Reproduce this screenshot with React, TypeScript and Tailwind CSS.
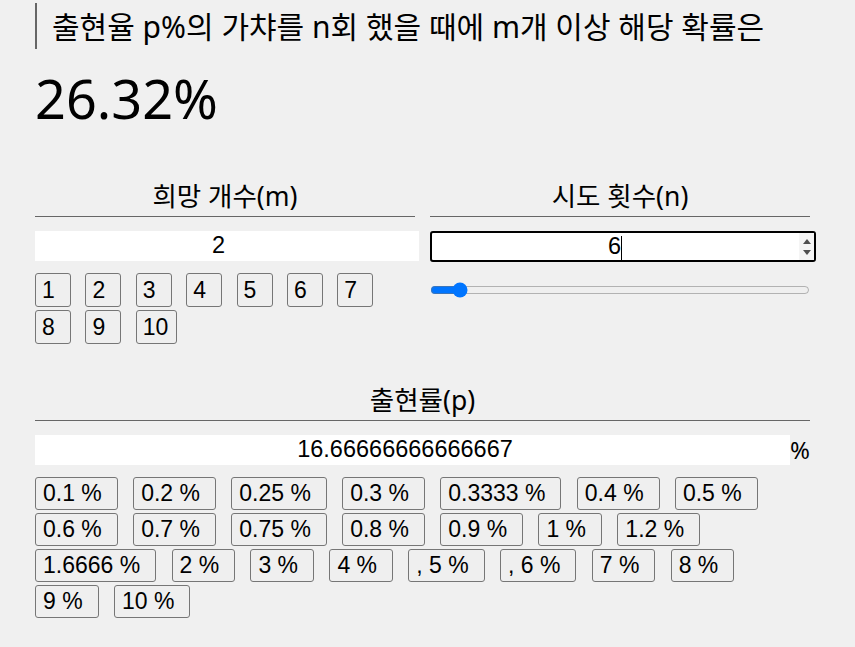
import { useState } from "react";

const counts = [1, 2, 3, 4, 5, 6, 7, 8, 9, 10];
const rates = [
  "0.1", "0.2", "0.25", "0.3", "0.3333", "0.4", "0.5",
  "0.6", "0.7", "0.75", "0.8", "0.9", "1", "1.2",
  "1.6666", "2", "3", "4", ", 5", ", 6", "7", "8",
  "9", "10",
];

const uiFont = { fontFamily: "'Liberation Sans', 'Noto Sans CJK KR', sans-serif" };

function probability(p: number, n: number, m: number) {
  const q = p / 100;
  let below = 0;
  let c = 1;
  for (let k = 0; k < m && k <= n; k++) {
    if (k > 0) c = (c * (n - k + 1)) / k;
    below += c * Math.pow(q, k) * Math.pow(1 - q, n - k);
  }
  return Math.max(0, 1 - below) * 100;
}

export default function App() {
  const [m, setM] = useState(2);
  const [n, setN] = useState(6);
  const [p, setP] = useState("16.66666666666667");

  const result = probability(parseFloat(p) || 0, n, m).toFixed(2);

  return (
    <div
      className="min-h-[647px] bg-[#f0f0f0] pl-[35px] pr-[45px] pt-[3px] text-black"
      style={{ fontFamily: "'Noto Sans', 'Noto Sans CJK KR', sans-serif" }}
    >
      <blockquote className="flex h-[46px] items-center border-l-2 border-[#666] pl-[15px] text-[30px]">
        출현율 p%의 가챠를 n회 했을 때에 m개 이상 해당 확률은
      </blockquote>

      <div className="mt-[14px] h-[116px] text-[54px] leading-[70px]">{result}%</div>

      <div className="grid grid-cols-2 gap-[15px]">
        <div>
          <h3 className="border-b border-[#666] pb-[3px] text-center text-[26.5px] leading-[34px]">
            희망 개수(m)
          </h3>
          <input
            className="mt-[14px] h-[30px] w-[384px] bg-white pl-[2px] pr-[19px] text-center text-[23.5px] outline-none"
            style={uiFont}
            value={m}
            onChange={(e) => setM(Number(e.target.value) || 0)}
          />
          <div className="mt-[12px] flex flex-wrap gap-x-[14.4px] gap-y-[3px]" style={uiFont}>
            {counts.map((c) => (
              <button
                key={c}
                onClick={() => setM(c)}
                className="h-[34px] min-w-[36px] rounded-[3px] border border-[#767676] bg-[#efefef] pl-[6px] pr-[8px] text-left text-[23px] leading-none"
              >
                {c}
              </button>
            ))}
          </div>
        </div>

        <div>
          <h3 className="border-b border-[#666] pb-[3px] text-center text-[26.5px] leading-[34px]">
            시도 횟수(n)
          </h3>
          <div className="relative mt-[14px] w-[386px]">
            <input
              className="h-[31px] w-full rounded-[3px] border-2 border-black bg-white pl-[2px] pr-[19px] text-center text-[23.5px] caret-black outline-none"
              style={uiFont}
              value={n}
              onChange={(e) => setN(Number(e.target.value) || 0)}
            />
            <div className="absolute right-[2px] top-[2px] flex h-[27px] w-[15px] flex-col items-center justify-center gap-[6px] bg-[#f5f5f5]">
              <svg width="8" height="5" viewBox="0 0 8 5">
                <path d="M0 5 L4 0 L8 5 Z" fill="#505050" />
              </svg>
              <svg width="8" height="5" viewBox="0 0 8 5">
                <path d="M0 0 L4 5 L8 0 Z" fill="#505050" />
              </svg>
            </div>
            <span className="absolute left-[191px] top-[5px] h-[24px] w-px bg-black" />
          </div>
          <input
            type="range"
            min={0}
            max={100}
            value={n}
            onChange={(e) => setN(Number(e.target.value))}
            className="mt-[20px] block w-full"
          />
        </div>
      </div>

      <h3 className="mt-[39px] border-b border-[#666] pb-[3px] text-center text-[26.5px] leading-[34px]">
        출현률(p)
      </h3>
      <div className="mt-[14px] flex items-center">
        <input
          className="h-[30px] flex-1 bg-white pl-[2px] pr-[17px] text-center text-[23.5px] outline-none"
          style={uiFont}
          value={p}
          onChange={(e) => setP(e.target.value)}
        />
        <span className="text-[24px] leading-[30px]">%</span>
      </div>
      <div className="mt-[12px] flex flex-wrap gap-x-[15.3px] gap-y-[3px]" style={uiFont}>
        {rates.map((r, i) => (
          <button
            key={i}
            onClick={() => setP(r.replace(", ", ""))}
            className="h-[33px] rounded-[3px] border border-[#767676] bg-[#efefef] pl-[7px] pr-[15px] text-left text-[23px] leading-none"
          >
            {r} %
          </button>
        ))}
      </div>
    </div>
  );
}
